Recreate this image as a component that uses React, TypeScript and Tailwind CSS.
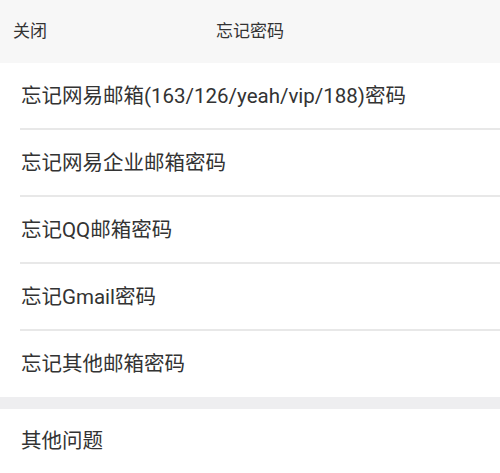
const items = [
  '忘记网易邮箱(163/126/yeah/vip/188)密码',
  '忘记网易企业邮箱密码',
  '忘记QQ邮箱密码',
  '忘记Gmail密码',
  '忘记其他邮箱密码',
];

const font = { fontFamily: 'Roboto, "Noto Sans CJK SC", sans-serif' };

export default function App() {
  return (
    <div className="w-[500px] h-[473px] bg-white text-[#333] overflow-hidden" style={font}>
      <header className="relative h-[63px] bg-[#f7f7f7] flex items-center">
        <span className="pl-[13px] text-[17px]">关闭</span>
        <span className="absolute left-1/2 -translate-x-1/2 text-[17px]">忘记密码</span>
      </header>

      <ul>
        {items.map((t, i) => (
          <li key={t} className="pl-[20px]">
            <div
              className={
                i < items.length - 1
                  ? 'h-[67px] flex items-center border-b-2 border-[#e8e8e8] text-[20.5px] pl-px pt-px'
                  : 'h-[66px] flex items-center text-[20.5px] pl-px'
              }
            >
              {t}
            </div>
          </li>
        ))}
      </ul>

      <div className="h-[12px] bg-[#eeeef0]" />

      <div className="h-[65px] pl-[21px] flex items-center text-[20.5px]">其他问题</div>
    </div>
  );
}
